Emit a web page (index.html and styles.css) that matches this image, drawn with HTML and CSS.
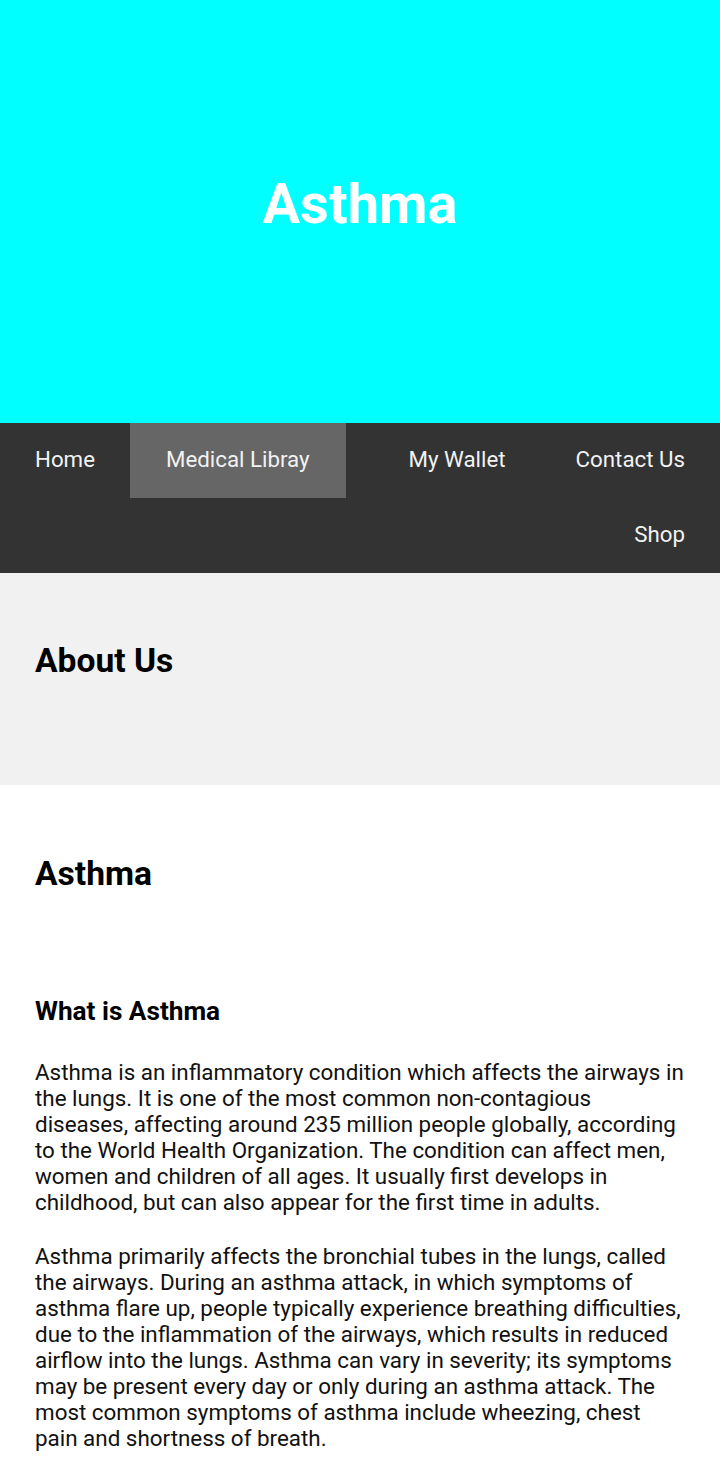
FILE: index.html
```html
<!DOCTYPE html>
<html lang="en">
<head>
<meta charset="utf-8">
<title>Asthma</title>
<link rel="stylesheet" href="styles.css">
</head>
<body>
<header class="hero">
  <h1 class="hero-title">Asthma</h1>
</header>
<nav class="topnav">
  <a class="nav-link" href="#">Home</a>
  <a class="nav-link active" href="#">Medical Libray</a>
  <a class="nav-link push" href="#">My Wallet</a>
  <a class="nav-link" href="#">Contact Us</a>
  <a class="nav-link push" href="#">Shop</a>
</nav>
<section class="about">
  <h2 class="section-title">About Us</h2>
</section>
<main class="content">
  <h2 class="section-title">Asthma</h2>
  <h3 class="sub-title">What is Asthma</h3>
  <p class="text">Asthma is an inflammatory condition which affects the airways in the lungs. It is one of the most common non-contagious diseases, affecting around 235 million people globally, according to the World Health Organization. The condition can affect men, women and children of all ages. It usually first develops in childhood, but can also appear for the first time in adults.</p>
  <p class="text">Asthma primarily affects the bronchial tubes in the lungs, called the airways. During an asthma attack, in which symptoms of asthma flare up, people typically experience breathing difficulties, due to the inflammation of the airways, which results in reduced airflow into the lungs. Asthma can vary in severity; its symptoms may be present every day or only during an asthma attack. The most common symptoms of asthma include wheezing, chest pain and shortness of breath.</p>
</main>
</body>
</html>
```
FILE: styles.css
```css
html, body {
  margin: 0;
  padding: 0;
}
body {
  font-family: Roboto, "Noto Sans", sans-serif;
  background: #fff;
  color: #000;
}
.hero {
  background: #00ffff;
  height: 423px;
  display: flex;
  align-items: center;
  justify-content: center;
}
.hero-title {
  margin: 0 0 16px 0;
  color: #fff;
  font-size: 56px;
  font-weight: 700;
  line-height: 1;
}
.topnav {
  background: #333;
  display: flex;
  flex-wrap: wrap;
}
.nav-link {
  color: #f2f2f2;
  text-decoration: none;
  font-size: 22.3px;
  line-height: 28px;
  padding: 22px 35px 25px;
}
.nav-link.active {
  background: #666;
  padding-left: 36px;
  padding-right: 36px;
}
.nav-link.push {
  margin-left: auto;
}
.about {
  background: #f1f1f1;
  height: 212px;
  padding: 0 35px;
  box-sizing: border-box;
  display: flex;
  flex-direction: column;
  justify-content: center;
}
.about .section-title {
  margin: 0 0 36px;
}
.section-title {
  font-size: 33.6px;
  font-weight: 700;
  line-height: 40px;
  margin: 0;
}
.content {
  padding: 69px 33px 40px 35px;
}
.sub-title {
  font-size: 26.2px;
  font-weight: 700;
  line-height: 30px;
  margin: 102px 0 33px;
}
.text {
  font-size: 22.4px;
  line-height: 26px;
  margin: 0 0 28px;
  color: #111;
}
```
